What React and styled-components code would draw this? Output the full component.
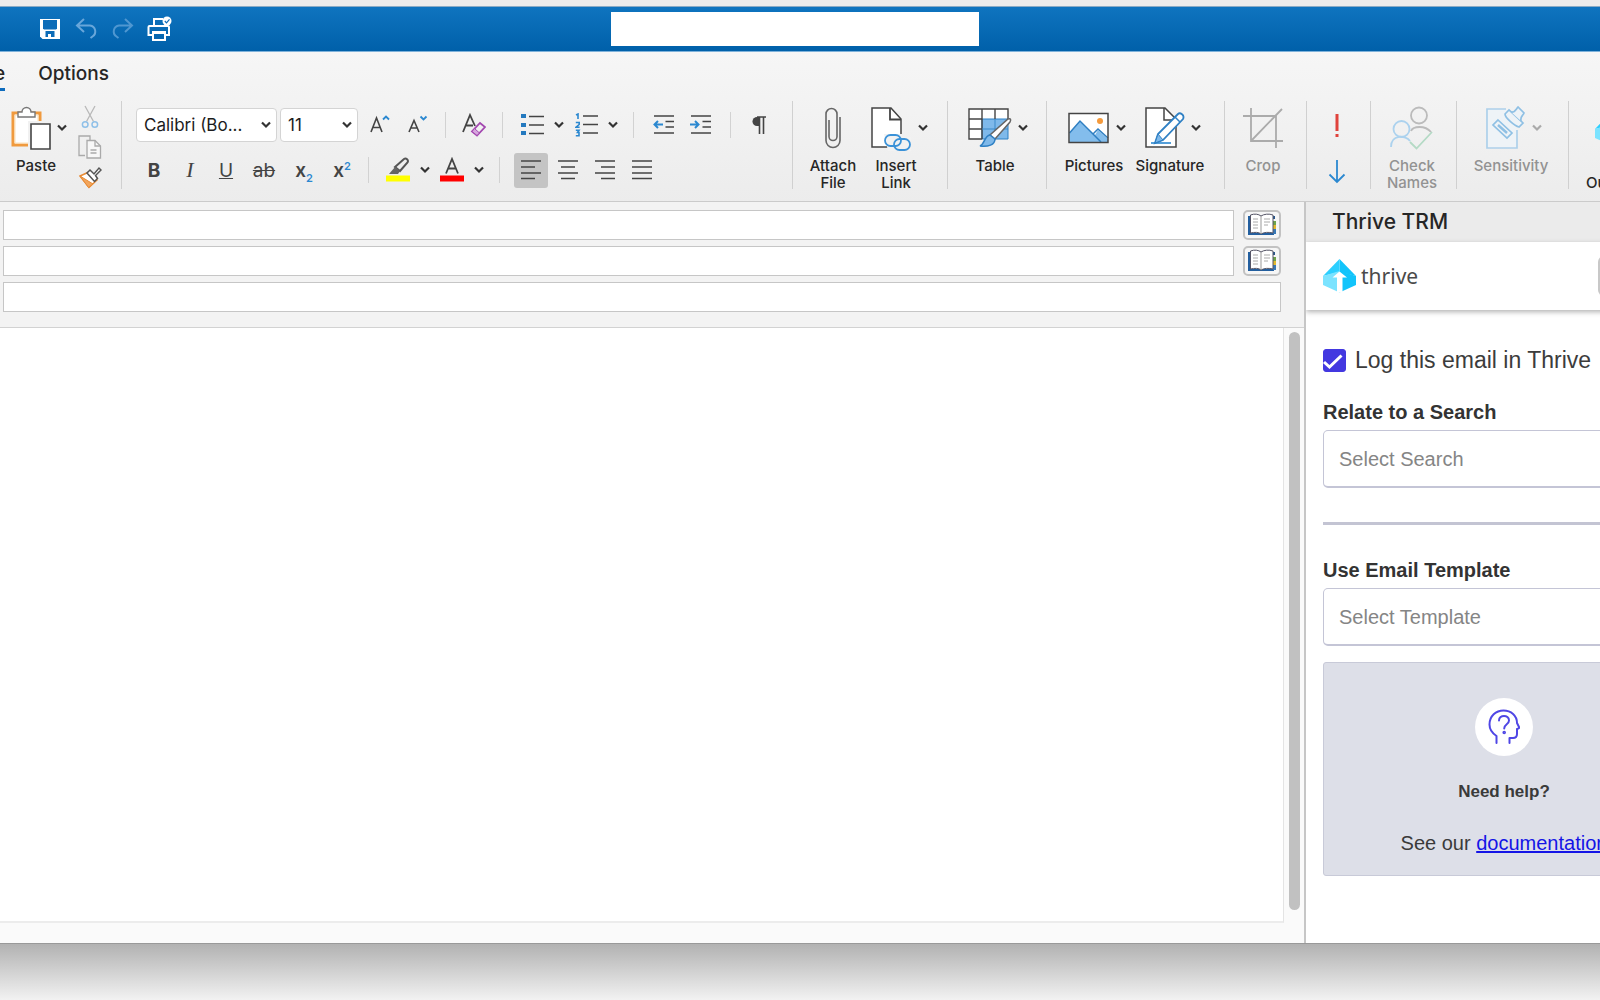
import React, { useState } from 'react'
import styled, { createGlobalStyle } from 'styled-components'

const INK = '#444'
const BLUE = '#2b88d0'

const Svg = ({ w, h, children, ...rest }) => (
  <svg width={w} height={h} viewBox={`0 0 ${w} ${h}`} fill='none' aria-hidden='true' {...rest}>
    {children}
  </svg>
)

const Chevron = ({ color = '#333' }) => (
  <Svg w={10} h={8} stroke={color} strokeWidth='2.2'>
    <path d='M1 1.5 L5 5.500 L9 1.5' />
  </Svg>
)

const SaveIcon = () => (
  <Svg w={24} h={22}>
    <path d='M1 1h20v20H3.5L1 18.5z' fill='#fff' />
    <path d='M4 2h14v8.500l-1 1H5l-1-1z' fill='#0c6cb8' />
    <path d='M6.500 19v-6h9v6h-3.500v-3h-3v3z' fill='#0c6cb8' />
  </Svg>
)

const UndoIcon = () => (
  <Svg w={24} h={22} stroke='#68a6da' strokeWidth='2'>
    <path d='M9 1 L2 7.5 L9 14 M2 7.5h13a6 6 0 0 1 2.500 11l-2 1.500' />
  </Svg>
)

const RedoIcon = () => (
  <Svg w={24} h={22} stroke='#4f97d1' strokeWidth='2'>
    <path d='M14 1 L21 7.5 L14 14 M21 7.5H8a6 6 0 0 0-2.500 11l2 1.500' />
  </Svg>
)

const PrintIcon = () => (
  <Svg w={26} h={26} stroke='#fff' strokeWidth='2'>
    <path d='M7 10V3h9' />
    <path d='M6 19H1.500V11q0-1 1-1H21q1 0 1 1v8h-4' />
    <path d='M5 16h14M6 17h12v7H6z' />
    <circle cx='20' cy='5' r='4.5' fill='#fff' stroke='none' />
    <path d='M17.8 5l1.700 1.800 3-3.400' stroke='#0c6cb8' strokeWidth='1.2' />
  </Svg>
)

const PasteIcon = () => (
  <Svg w={40} h={46}>
    <path d='M2 8h27v32H2z' fill='#fff' stroke='#f09a3e' strokeWidth='3' />
    <path d='M4 10h23v28H4z' stroke='#fbe0b8' />
    <path d='M7 12V7h4a4.500 4.500 0 0 1 9 0h4v5z' fill='#fff' stroke='#777' strokeWidth='1.4' />
    <path d='M17 16h23v30H17z' fill='#f1f1f1' />
    <path d='M20 19h19v25H20z' fill='#fff' stroke='#444' strokeWidth='1.6' />
  </Svg>
)

const CutIcon = () => (
  <Svg w={18} h={24}>
    <path d='M4 1l8.500 15.500M14 1L5.500 16.500' stroke='#b8b8b8' strokeWidth='1.3' />
    <circle cx='4.2' cy='19.5' r='2.8' stroke='#8fc0e8' strokeWidth='1.5' />
    <circle cx='13.8' cy='19.5' r='2.8' stroke='#8fc0e8' strokeWidth='1.5' />
  </Svg>
)

const CopyIcon = () => (
  <Svg w={24} h={24} stroke='#aaa' strokeWidth='1.3'>
    <path d='M7 20.500H1V1h11v4' />
    <path d='M9 5.500h8l5.500 5.500v12H9z' fill='#f7f7f7' />
    <path d='M17 5.500V11h5.500' />
    <path d='M12.500 15h6M12.500 18h6' />
  </Svg>
)

const FormatIcon = () => (
  <Svg w={24} h={24}>
    <path d='M2 11l9-4 8 8-8 7.500z' fill='#fff' stroke='#e88b35' strokeWidth='1.5' />
    <path d='M2 11l13 8-4.500 3.500z' fill='#f2a55c' stroke='#e88b35' />
    <path d='M9 8l3-3 4 4 5-6 2 2-5.500 5.500 2 3-3 3z' fill='#fff' stroke='#555' strokeWidth='1.5' />
  </Svg>
)

const GrowIcon = () => (
  <Svg w={20} h={20}>
    <path d='M1 17L6.500 3 12 17M3 12.500h7' stroke={INK} strokeWidth='1.6' />
    <path d='M13 4.500l3-3 3 3' stroke={BLUE} strokeWidth='1.8' />
  </Svg>
)

const ShrinkIcon = () => (
  <Svg w={20} h={20}>
    <path d='M1 17L6 5.500 11 17M3 13h6' stroke={INK} strokeWidth='1.6' />
    <path d='M12.500 1.500l3 3 3-3' stroke={BLUE} strokeWidth='1.8' />
  </Svg>
)

const ClearIcon = () => (
  <Svg w={24} h={24}>
    <path d='M1 19L8 2l5 11M4 12.500h7' stroke={INK} strokeWidth='1.8' />
    <path d='M18 10l5 4-8 8.500-5-4z' stroke='#a347b0' strokeWidth='1.8' />
    <path d='M12.500 15.500l5 4.500-2.500 2.500-5-4z' fill='#d7a6de' stroke='#a347b0' />
  </Svg>
)

const BulletsIcon = () => (
  <Svg w={23} h={22}>
    <path d='M0 0h5v4H0zM0 9h5v4H0zM0 17h5v4H0z' fill='#2479bf' />
    <path d='M8 2.500h15M8 11h15M8 19.500h15' stroke={INK} strokeWidth='1.6' />
  </Svg>
)

const NumbersIcon = () => (
  <Svg w={23} h={24}>
    <g stroke={BLUE} strokeWidth='1.6'>
      <path d='M1 2L3 1v5' />
      <path d='M.8 9.500h3.400v2L1 14.200h3.600' />
      <path d='M.8 17.200H4L2.500 19.500H4v3.200H.8' />
    </g>
    <path d='M8 3h15M8 11.500h15M8 20h15' stroke={INK} strokeWidth='1.5' />
  </Svg>
)

const IndentIcon = ({ out }) => (
  <Svg w={22} h={22}>
    <path d='M1 2h20M12.500 7.500H21M12.500 13H21M1 19h20' stroke={INK} strokeWidth='1.6' />
    <path
      d={out ? 'M10 10.500H1.500M5 7l-3.500 3.500L5 14' : 'M0 10.500h8.500M5 7l3.500 3.500L5 14'}
      stroke={BLUE}
      strokeWidth='2'
    />
  </Svg>
)

const PilcrowIcon = () => (
  <Svg w={16} h={18}>
    <path d='M8 1v9H6A4.500 4.500 0 0 1 6 1z' fill={INK} />
    <path d='M6 1h9M8.500 1v17M12.500 1v17' stroke={INK} strokeWidth='1.6' />
  </Svg>
)

const HighlightIcon = () => (
  <Svg w={24} h={26}>
    <path d='M9 10l9-8c2-1.500 5 1 3.500 3.500L14 14z' stroke='#555' strokeWidth='2' />
    <path d='M3 17l6-7 5 4-2 3z' fill='#666' />
    <path d='M0 18.500h24v6H0z' fill='#ff0' />
  </Svg>
)

const FontColorIcon = () => (
  <Svg w={24} h={26}>
    <path d='M6 16.500L12 2l6 14.500M8 11.500h8' stroke={INK} strokeWidth='1.8' />
    <path d='M0 18.500h24v6H0z' fill='red' />
  </Svg>
)

const AlignIcon = ({ lines }) => (
  <Svg w={22} h={22} stroke={INK} strokeWidth='1.6'>
    <path d={lines} />
  </Svg>
)

const ClipIcon = () => (
  <Svg w={18} h={42} stroke='#666' strokeWidth='1.6'>
    <path d='M16 10v23.500a7 7 0 0 1-14 0V7a5.500 5.500 0 0 1 11 0v22.500a4 4 0 0 1-8 0V13' />
  </Svg>
)

const LinkIcon = () => (
  <Svg w={42} h={46}>
    <path d='M2 3h19l10 11v28H2z' fill='#fff' stroke={INK} strokeWidth='1.5' />
    <path d='M20 3v11.500h11' stroke={INK} strokeWidth='1.8' />
    <path d='M14 29h18v3h9v14H18z' fill='#f2f2f2' />
    <g stroke='#3b92d8' strokeWidth='1.8'>
      <rect x='15' y='30' width='16' height='11' rx='5.5' />
      <rect x='24' y='34' width='16' height='11' rx='5.5' />
    </g>
  </Svg>
)

const TableIcon = () => (
  <Svg w={44} h={40}>
    <path d='M1 1h39v30H1z' fill='#fff' />
    <path d='M14 11h26v20H14z' fill='#7fb9ea' stroke='#2f80c4' />
    <path d='M40 11V1H1v30h13M14 1v30M27 1v10M1 11h13M1 21h13' stroke={INK} strokeWidth='1.4' />
    <path d='M27 11v20M14 21h26' stroke='#3d89c8' />
    <path d='M40 11c3-1 3 1 2 3L27 31l-5-4z' fill='#fff' stroke='#666' strokeWidth='1.5' />
    <path d='M22 27l5 4c0 6-7 8-15 7 5-2 4-10 10-11z' fill='#7fb9ea' stroke='#2f80c4' strokeWidth='1.5' />
  </Svg>
)

const PicturesIcon = () => (
  <Svg w={42} h={32}>
    <path d='M1 1.500h39v29H1z' fill='#fff' />
    <path d='M1.500 21L12 9l15 14 3-5 10 9v4H1.500z' fill='#83bdec' />
    <path d='M1.500 21L12 9l21 21M25 22l5-5 10 9' stroke='#2f7fc2' strokeWidth='1.5' />
    <path d='M1 1.500h39v29H1z' stroke={INK} strokeWidth='1.5' />
    <circle cx='32' cy='9' r='3' fill='#f59a3c' />
  </Svg>
)

const SignatureIcon = () => (
  <Svg w={40} h={42}>
    <path d='M1 1h19l11 11v28H1z' fill='#fff' stroke={INK} strokeWidth='1.5' />
    <path d='M19 1v12h11' stroke={INK} strokeWidth='1.5' />
    <path d='M6 36h20' stroke={BLUE} strokeWidth='1.6' />
    <path d='M33 7c2-2 7 1 5 5L18 33l-8 3 3-9z' fill='#fff' stroke='#2f80c4' strokeWidth='1.8' />
    <path d='M13 27l5 6-8 3z' fill='#7fb9ea' stroke='#2f80c4' />
    <path d='M30 10l5 5' stroke='#2f80c4' strokeWidth='1.5' />
  </Svg>
)

const CropIcon = () => (
  <Svg w={40} h={42} stroke='#ababab' strokeWidth='1.8'>
    <path d='M0 9h33v32M8 1v33h32M8 34L39 2' />
  </Svg>
)

const NamesIcon = () => (
  <Svg w={44} h={44} strokeWidth='1.8'>
    <path d='M21 25c2-5 14-6 20 1' stroke='#bbb' />
    <circle cx='29' cy='9.5' r='8' stroke='#bbb' />
    <circle cx='11.5' cy='23' r='8' stroke='#acd2ee' />
    <path d='M1 41c0-13 15-12 19-6' stroke='#acd2ee' />
    <path d='M20 36l6.500 6.500L42 26' stroke='#b4dac5' />
  </Svg>
)

const SensitivityIcon = () => (
  <Svg w={40} h={44}>
    <path d='M20 3H1v39h30V24' fill='#eef3f7' stroke='#add0ea' strokeWidth='1.7' />
    <path d='M12 14l14 13-5 5L7 19z' fill='#eef3f7' stroke='#8fc0e4' strokeWidth='1.7' />
    <path d='M12 19l9 8' stroke='#8fc0e4' strokeWidth='2.5' />
    <path d='M19 8l4-4 14 13-4 4c-4-1-14-9-14-13z' fill='#eef3f7' stroke='#8fc0e4' strokeWidth='1.7' />
    <path d='M25 6c4 1 5-3 7-5l6 6c-1 3-4 3-3 8' fill='#eef3f7' stroke='#8fc0e4' strokeWidth='1.7' />
  </Svg>
)

const ImportantIcon = () => (
  <Svg w={6} h={24}>
    <path d='M1.500 0h3v17h-3zM1.500 20h3v3h-3z' fill='#e0433c' />
  </Svg>
)

const LowIcon = () => (
  <Svg w={18} h={24} stroke={BLUE} strokeWidth='1.8'>
    <path d='M9 0v22M1.500 14.500L9 22l7.500-7.500' />
  </Svg>
)

const BookIcon = () => (
  <Svg w={30} h={24}>
    <path d='M1 3h3v17h20v-2h3v4H1z' fill='#235f9f' />
    <path d='M26 3h2v3h-2z' fill='#27568a' />
    <path d='M26 8h3v4h-3z' fill='#6fa34a' />
    <path d='M26 12h3v4h-3z' fill='#e3b92e' />
    <path d='M26 16h3v5h-3z' fill='#3978b5' />
    <path d='M3.500 2c4-1.500 8-1 10.500 1 3-2 8-2.500 12-1v18c-4-1-9-1-12 1-2-2-6.500-2-10.500-1z' fill='#fff' stroke='#556' />
    <path d='M14 3v18' stroke='#999' />
    <path d='M6 6h5M6 9h5M6 12h5M6 15h5M17 6h6M17 9h6M17 12h4' stroke='#aaa' />
  </Svg>
)

const Cube = () => (
  <Svg w={34} h={34}>
    <path d='M16.500 0L33 17l-16.500-4z' fill='#12c4fb' />
    <path d='M16.500 0v13L0 17z' fill='#2ccfff' />
    <path d='M0 17l16.500-5v21.500L0 26z' fill='#7be3ff' />
    <path d='M33 17l-16.500-5v21.500L33 26z' fill='#12c4fb' />
    <path d='M16.500 12.500l7.500 6h-4.500v15h-5.500v-15H9.500z' fill='#fff' />
  </Svg>
)

const HeadIcon = () => (
  <Svg w={32} h={36} stroke='#4f46e5' strokeWidth='2' strokeLinecap='round' strokeLinejoin='round'>
    <path d='M8.500 34v-7C4 24 1.500 20 1.500 15.500 1.500 7 8 1.500 15.500 1.500 23 1.500 29 6.500 29 14l2 4c.5 1-.5 1.500-2 2v5c0 2.500-1.500 4-4 4h-3.500v5' />
    <path d='M11 11.500c0-6 10-6 10 0 0 4-4.800 3.500-4.800 8' />
    <circle cx='16.2' cy='23.5' r='.8' />
  </Svg>
)

const alignments = [
  { name: 'Align left', lines: 'M1 2h20M1 8h14M1 14h20M1 19.500h14' },
  { name: 'Center', lines: 'M1 2h20M4 8h14M1 14h20M4 19.500h14' },
  { name: 'Align right', lines: 'M1 2h20M7 8h14M1 14h20M7 19.500h14' },
  { name: 'Justify', lines: 'M1 2h20M1 8h20M1 14h20M1 19.500h20' }
]

function Command ({ label, icon, arrow, width, disabled }) {
  return (
    <CommandButton $width={width} disabled={disabled}>
      <CommandIcon $arrow={arrow}>
        {icon}
        {arrow && <Chevron color={disabled ? '#aaa' : '#333'} />}
      </CommandIcon>
      <span>{label}</span>
    </CommandButton>
  )
}

function FontGroup () {
  const [align, setAlign] = useState('Align left')
  return (
    <FontTools>
      <ToolRow>
        <Picker $width={141}>
          <select aria-label='Font'>
            <option>Calibri (Bo...</option>
          </select>
          <Chevron />
        </Picker>
        <Picker $width={78}>
          <select aria-label='Font size'>
            <option>11</option>
          </select>
          <Chevron />
        </Picker>
        <Tool aria-label='Grow font' $width={38}><GrowIcon /></Tool>
        <Tool aria-label='Shrink font' $width={38}><ShrinkIcon /></Tool>
        <Rule $gap={8} />
        <Tool aria-label='Clear formatting' $width={40}><ClearIcon /></Tool>
        <Rule $gap={8} />
        <Tool aria-label='Bullets' $width={42}><BulletsIcon /></Tool>
        <Tool aria-label='Bullet styles' $width={12}><Chevron /></Tool>
        <Tool aria-label='Numbering' $width={42}><NumbersIcon /></Tool>
        <Tool aria-label='Numbering styles' $width={12}><Chevron /></Tool>
        <Rule $gap={14} />
        <Tool aria-label='Decrease indent' $width={32}><IndentIcon out /></Tool>
        <Tool aria-label='Increase indent' $width={42}><IndentIcon /></Tool>
        <Rule $gap={8} />
        <Tool aria-label='Show marks' $width={40}><PilcrowIcon /></Tool>
      </ToolRow>
      <ToolRow>
        <Tool $width={36}><b>B</b></Tool>
        <Tool $width={36}><Slanted>I</Slanted></Tool>
        <Tool $width={36}><u>U</u></Tool>
        <Tool $width={40}><s>ab</s></Tool>
        <Tool $width={40}><Script>x<sub>2</sub></Script></Tool>
        <Tool $width={36}><Script>x<sup>2</sup></Script></Tool>
        <Rule $gap={8} />
        <Tool aria-label='Highlight' $width={42}><HighlightIcon /></Tool>
        <Tool aria-label='Highlight colors' $width={12}><Chevron /></Tool>
        <Tool aria-label='Font color' $width={42}><FontColorIcon /></Tool>
        <Tool aria-label='Font colors' $width={12}><Chevron /></Tool>
        <Rule $gap={14} />
        {alignments.map(item => (
          <AlignTool
            key={item.name}
            aria-label={item.name}
            $active={align === item.name}
            onClick={() => setAlign(item.name)}
          >
            <AlignIcon lines={item.lines} />
          </AlignTool>
        ))}
      </ToolRow>
    </FontTools>
  )
}

function Ribbon () {
  return (
    <RibbonBar>
      <Group $width={122}>
        <Command width={72} label='Paste' arrow icon={<PasteIcon />} />
        <ClipboardColumn>
          <button aria-label='Cut'><CutIcon /></button>
          <button aria-label='Copy'><CopyIcon /></button>
          <button aria-label='Format painter'><FormatIcon /></button>
        </ClipboardColumn>
      </Group>
      <Group $width={671} $start={14}>
        <FontGroup />
      </Group>
      <Group $width={155} $start={10}>
        <Command width={60} label='Attach File' icon={<ClipIcon />} />
        <Command width={66} label='Insert Link' arrow icon={<LinkIcon />} />
      </Group>
      <Group $width={99} $start={12}>
        <Command width={70} label='Table' arrow icon={<TableIcon />} />
      </Group>
      <Group $width={178} $start={10}>
        <Command width={74} label='Pictures' arrow icon={<PicturesIcon />} />
        <Command width={78} label='Signature' arrow icon={<SignatureIcon />} />
      </Group>
      <Group $width={82} $start={8}>
        <Command width={60} label='Crop' disabled icon={<CropIcon />} />
      </Group>
      <Group $width={64}>
        <PriorityColumn>
          <button aria-label='High importance'><ImportantIcon /></button>
          <button aria-label='Low importance'><LowIcon /></button>
        </PriorityColumn>
      </Group>
      <Group $width={86} $start={11}>
        <Command width={60} label='Check Names' disabled icon={<NamesIcon />} />
      </Group>
      <Group $width={112} $start={14}>
        <Command width={80} label='Sensitivity' arrow disabled icon={<SensitivityIcon />} />
      </Group>
      <AddinButton>
        <Cube />
        <span>Ou</span>
      </AddinButton>
    </RibbonBar>
  )
}

function ThrivePanel () {
  const [logged, setLogged] = useState(true)
  return (
    <Panel>
      <PanelTitle>Thrive TRM</PanelTitle>
      <PanelBody>
        <Brand>
          <Cube />
          <span>thrive</span>
          <MenuButton aria-label='Menu' />
        </Brand>
        <PanelForm>
          <CheckLabel>
            <input
              type='checkbox'
              checked={logged}
              onChange={e => setLogged(e.target.checked)}
            />
            {logged && (
              <Svg w={24} h={24} stroke='#fff' strokeWidth='3'>
                <path d='M1 14l5.500 5L18.500 7.500' />
              </Svg>
            )}
            Log this email in Thrive
          </CheckLabel>
          <Field>
            <label htmlFor='search'>Relate to a Search</label>
            <select id='search'>
              <option>Select Search</option>
            </select>
          </Field>
          <Separator />
          <Field>
            <label htmlFor='template'>Use Email Template</label>
            <select id='template'>
              <option>Select Template</option>
            </select>
          </Field>
          <HelpCard>
            <HelpBadge><HeadIcon /></HelpBadge>
            <h2>Need help?</h2>
            <p>See our <a href='#documentation'>documentation</a></p>
          </HelpCard>
        </PanelForm>
      </PanelBody>
    </Panel>
  )
}

function App () {
  return (
    <Desktop>
      <GlobalStyle />
      <Window>
        <TitleBar>
          <QuickTools>
            <button aria-label='Save'><SaveIcon /></button>
            <button aria-label='Undo'><UndoIcon /></button>
            <button aria-label='Redo'><RedoIcon /></button>
            <button aria-label='Print'><PrintIcon /></button>
          </QuickTools>
          <TitleInput aria-label='Title' />
        </TitleBar>
        <Tabs>
          <Tab $active>e</Tab>
          <Tab>Options</Tab>
        </Tabs>
        <Ribbon />
        <Workspace>
          <Compose>
            <Headers>
              <HeaderRow>
                <input aria-label='To' />
                <BookButton aria-label='To address book'><BookIcon /></BookButton>
              </HeaderRow>
              <HeaderRow>
                <input aria-label='Cc' />
                <BookButton aria-label='Cc address book'><BookIcon /></BookButton>
              </HeaderRow>
              <HeaderRow>
                <input aria-label='Subject' />
              </HeaderRow>
            </Headers>
            <EditorArea>
              <Editor aria-label='Message body' />
              <ScrollThumb />
            </EditorArea>
          </Compose>
          <ThrivePanel />
        </Workspace>
      </Window>
    </Desktop>
  )
}

export default App

const GlobalStyle = createGlobalStyle`
  * {
    box-sizing: border-box;
  }
  body {
    margin: 0;
    font-family: Inter, 'Liberation Sans', sans-serif;
    color: #262626;
  }
  button {
    display: flex;
    align-items: center;
    justify-content: center;
    padding: 0;
    border: 0;
    background: none;
    color: inherit;
    font-family: inherit;
  }
  svg {
    display: block;
    flex-shrink: 0;
  }
`

const Desktop = styled.div`
  display: flex;
  flex-direction: column;
  height: 100vh;
  padding: 6px 0 56px;
  overflow: hidden;
  background: linear-gradient(#ececec 6px, #adadad 94%, #f2f2f2 100%);
`

const Window = styled.main`
  display: flex;
  flex: 1;
  flex-direction: column;
  min-height: 0;
  border-bottom: 1px solid #999;
  background: linear-gradient(#f6f6f6 46px, #ececec 196px);
`

const TitleBar = styled.header`
  display: grid;
  grid-template-columns: 1fr 368px 1fr;
  align-items: center;
  flex-shrink: 0;
  height: 46px;
  padding-right: 11px;
  border-top: 1px solid #8aabc5;
  border-bottom: 1px solid #7fb2da;
  background: linear-gradient(#0f74bf, #0060a9);
`

const QuickTools = styled.div`
  display: flex;
  align-items: center;
  gap: 12px;
  padding-left: 39px;
`

const TitleInput = styled.input`
  height: 34px;
  border: 0;
  background: #fff;
`

const Tabs = styled.nav`
  display: flex;
  flex-shrink: 0;
  gap: 33px;
  height: 49px;
  padding-top: 7px;
`

const Tab = styled.button`
  height: 32px;
  margin-left: ${props => (props.$active ? '-6px' : 0)};
  border-bottom: 3px solid ${props => (props.$active ? '#0f6cbd' : 'transparent')};
  font-size: 19px;
  font-weight: 500;
`

const RibbonBar = styled.div`
  display: flex;
  flex-shrink: 0;
  height: 101px;
  padding-bottom: 12px;
  overflow: hidden;
  border-bottom: 1px solid #cbcbcb;
`

const Group = styled.div`
  display: flex;
  flex-shrink: 0;
  width: ${props => props.$width}px;
  padding-left: ${props => props.$start || 0}px;
  border-right: 1px solid #d0d0d0;
`

const CommandButton = styled.button`
  flex-direction: column;
  align-self: flex-start;
  width: ${props => props.$width}px;
  padding-top: 4px;
  font-size: 15px;
  font-weight: 500;
  line-height: 17px;
  color: ${props => (props.disabled ? '#929292' : '#262626')};
  span {
    width: min-content;
  }
`

const CommandIcon = styled.div`
  display: flex;
  align-items: center;
  gap: 6px;
  height: 46px;
  margin-bottom: 6px;
  padding-left: ${props => (props.$arrow ? 6 : 0)}px;
`

const ClipboardColumn = styled.div`
  display: flex;
  flex-direction: column;
  align-items: center;
  justify-content: space-between;
  width: 36px;
  padding-top: 4px;
`

const PriorityColumn = styled.div`
  display: flex;
  flex-direction: column;
  align-items: center;
  justify-content: space-between;
  width: 60px;
  padding: 13px 0 5px;
`

const FontTools = styled.div`
  display: flex;
  flex: 1;
  flex-direction: column;
  gap: 11px;
  padding-top: 7px;
`

const ToolRow = styled.div`
  display: flex;
  align-items: center;
  height: 34px;
`

const Picker = styled.div`
  display: flex;
  align-items: center;
  width: ${props => props.$width}px;
  height: 34px;
  margin-right: 3px;
  padding-right: 5px;
  border: 1px solid #d4d4d4;
  border-radius: 4px;
  background: #fff;
  select {
    flex: 1;
    min-width: 0;
    padding: 0 0 0 7px;
    border: 0;
    appearance: none;
    background: none;
    font-family: inherit;
    font-size: 17px;
    color: #1c1c1c;
  }
`

const Tool = styled.button`
  flex-shrink: 0;
  width: ${props => props.$width}px;
  height: 34px;
  font-size: 19px;
  color: #444;
`

const Slanted = styled.i`
  font-family: 'Liberation Serif', serif;
  font-size: 22px;
`

const Script = styled.span`
  font-weight: 600;
  sub,
  sup {
    font-size: 11px;
    line-height: 0;
    color: #2b88d0;
  }
`

const AlignTool = styled.button`
  width: 34px;
  height: 35px;
  margin-right: 3px;
  border-radius: 3px;
  background: ${props => (props.$active ? '#c4c4c4' : 'transparent')};
`

const Rule = styled.span`
  width: 1px;
  height: 26px;
  margin: 0 ${props => props.$gap}px;
  background: #d2d2d2;
`

const AddinButton = styled.button`
  flex-direction: column;
  align-items: flex-start;
  justify-content: flex-start;
  flex-shrink: 0;
  gap: 28px;
  width: 80px;
  padding: 11px 0 0 17px;
  font-size: 15px;
  font-weight: 500;
  line-height: 17px;
  svg {
    margin-left: 9px;
  }
`

const Workspace = styled.div`
  display: flex;
  flex: 1;
  min-height: 0;
`

const Compose = styled.section`
  display: flex;
  flex: 1;
  flex-direction: column;
  min-width: 0;
  border-right: 2px solid #c6c6c6;
  background: #fafafa;
`

const Headers = styled.div`
  display: flex;
  flex-direction: column;
  gap: 6px;
  padding: 8px 23px 15px 3px;
  border-bottom: 1px solid #d2d2d2;
  background: #f3f3f3;
`

const HeaderRow = styled.div`
  display: flex;
  gap: 9px;
  height: 30px;
  input {
    flex: 1;
    min-width: 0;
    border: 1px solid #c6c6c6;
    background: #fff;
  }
`

const BookButton = styled.button`
  width: 38px;
  border: 2px solid #c2c2c2;
  border-radius: 5px;
  background: #f6f6f6;
`

const EditorArea = styled.div`
  display: flex;
  flex: 1;
  gap: 5px;
  min-height: 0;
  padding: 0 4px 20px 0;
`

const Editor = styled.textarea`
  flex: 1;
  border: 0;
  border-right: 1px solid #e4e4e4;
  border-bottom: 2px solid #ececec;
  resize: none;
  background: #fff;
`

const ScrollThumb = styled.div`
  width: 11px;
  margin: 4px 0 13px;
  border-radius: 6px;
  background: #c1c1c1;
`

const Panel = styled.aside`
  flex: 0 0 294px;
  overflow: hidden;
  background: #fff;
  font-family: 'Liberation Sans', Arial, sans-serif;
`

const PanelTitle = styled.div`
  height: 40px;
  padding-left: 26px;
  background: #ebebeb;
  font-family: Inter, sans-serif;
  font-size: 21px;
  font-weight: 500;
  line-height: 40px;
`

const PanelBody = styled.div`
  width: 396px;
`

const Brand = styled.div`
  display: flex;
  align-items: center;
  height: 68px;
  padding-left: 17px;
  box-shadow: 0 2px 5px rgba(0, 0, 0, 0.3);
  span {
    margin-left: 4px;
    font-family: 'Noto Sans', sans-serif;
    font-size: 21px;
    color: #4a4a4a;
  }
`

const MenuButton = styled.button`
  width: 40px;
  height: 40px;
  margin: 0 64px 0 auto;
  border-radius: 6px;
  background: #c8c8c8;
`

const PanelForm = styled.div`
  display: flex;
  flex-direction: column;
  padding: 36px 17px;
`

const CheckLabel = styled.label`
  display: flex;
  align-items: center;
  position: relative;
  height: 28px;
  font-size: 23px;
  color: #3c3c3c;
  input {
    width: 23px;
    height: 23px;
    margin: 0 9px 0 0;
    border: 1px solid #4338e0;
    border-radius: 3px;
    appearance: none;
    background: #fff;
  }
  input:checked {
    background: #4338e0;
  }
  svg {
    position: absolute;
    left: 0;
    pointer-events: none;
  }
`

const Field = styled.div`
  display: flex;
  flex-direction: column;
  label {
    margin: 25px 0 5px;
    font-size: 20px;
    font-weight: 700;
    line-height: 26px;
    color: #333;
  }
  select {
    height: 58px;
    padding: 0 15px;
    border: 1px solid #c4c5d6;
    border-bottom-width: 2px;
    border-radius: 5px;
    appearance: none;
    background: #fff;
    font-family: inherit;
    font-size: 20px;
    color: #858585;
  }
`

const Separator = styled.hr`
  width: 100%;
  height: 3px;
  margin: 34px 0 7px;
  border: 0;
  background: #c3c4d3;
`

const HelpCard = styled.section`
  display: flex;
  flex-direction: column;
  align-items: center;
  height: 214px;
  margin-top: 16px;
  padding-top: 35px;
  border: 1px solid #c8cad8;
  border-radius: 3px;
  background: #dddfe8;
  color: #3a3a3a;
  h2 {
    margin: 24px 0 0;
    font-size: 17px;
    line-height: 24px;
  }
  p {
    margin: 26px 0 0;
    font-size: 20px;
    line-height: 26px;
  }
  a {
    color: #1414e6;
  }
`

const HelpBadge = styled.div`
  display: flex;
  align-items: center;
  justify-content: center;
  width: 58px;
  height: 58px;
  border-radius: 50%;
  background: #fff;
`
